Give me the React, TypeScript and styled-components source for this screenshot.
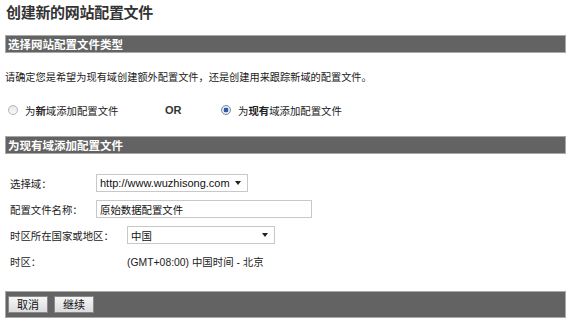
import React, { useState } from "react";
import styled, { createGlobalStyle } from "styled-components";

const GlobalStyle = createGlobalStyle`
  html, body {
    margin: 0;
    padding: 0;
    background: #ffffff;
  }
  body {
    font-family: "Noto Sans CJK SC", "Liberation Sans", sans-serif;
    color: #222;
  }
`;

const Page = styled.div`
  width: 561px;
  margin-left: 5px;
  padding-top: 3px;
`;

const Title = styled.h1`
  margin: 0 0 0 1px;
  font-size: 15px;
  line-height: 18px;
  font-weight: bold;
  color: #333;
  letter-spacing: -0.3px;
`;

const SectionBar = styled.div<{ $top: number }>`
  margin-top: ${({ $top }) => $top}px;
  height: 18px;
  box-sizing: border-box;
  background: #636363;
  border: 1px solid #a8a8a8;
  color: #fff;
  font-size: 11.5px;
  font-weight: bold;
  line-height: 16px;
  padding-left: 2px;
`;

const Intro = styled.p`
  margin: 16px 0 0;
  font-size: 10.2px;
  line-height: 16px;
  color: #222;
`;

const ChoiceRow = styled.div`
  margin-top: 17px;
  height: 16px;
  display: flex;
  align-items: center;
  padding-left: 3px;
  font-size: 10.4px;
`;

const Choice = styled.label<{ $width?: number }>`
  display: flex;
  align-items: center;
  gap: 7px;
  width: ${({ $width }) => ($width ? `${$width}px` : "auto")};
  cursor: pointer;
`;

const RadioDot = styled.span<{ $on: boolean }>`
  width: 10px;
  height: 10px;
  box-sizing: border-box;
  border-radius: 50%;
  border: 1px solid ${({ $on }) => ($on ? "#7a8fa8" : "#b4b4b4")};
  background: ${({ $on }) =>
    $on
      ? "radial-gradient(circle, #2f5aa0 0 2.2px, #dfe6f0 2.6px)"
      : "linear-gradient(#e8e8e8, #fafafa)"};
  flex: none;
`;

const Or = styled.span`
  width: 56px;
  font-family: "Liberation Sans", Arial, sans-serif;
  font-weight: bold;
  font-size: 11px;
  color: #333;
`;

const Form = styled.div`
  margin-top: 20px;
  padding-left: 5px;
  display: grid;
  row-gap: 8px;
`;

const Row = styled.div<{ $label: number }>`
  display: grid;
  grid-template-columns: ${({ $label }) => $label}px auto;
  align-items: center;
  height: 18px;
  font-size: 10.4px;
`;

const FieldLabel = styled.span`
  color: #222;
`;

const Select = styled.div<{ $width: number }>`
  width: ${({ $width }) => $width}px;
  height: 18px;
  box-sizing: border-box;
  border: 1px solid #c8c8c8;
  background: #fff;
  display: flex;
  align-items: center;
  justify-content: space-between;
  padding: 0 6px 0 3px;
  font-size: 10.4px;
`;

const SelectText = styled.span<{ $latin?: boolean }>`
  font-family: ${({ $latin }) =>
    $latin ? `"Liberation Sans", Arial, sans-serif` : "inherit"};
  font-size: ${({ $latin }) => ($latin ? "11px" : "10.4px")};
  color: #111;
`;

const Arrow = styled.span`
  width: 0;
  height: 0;
  border-left: 3.5px solid transparent;
  border-right: 3.5px solid transparent;
  border-top: 4px solid #222;
`;

const TextInput = styled.input`
  width: 216px;
  height: 18px;
  box-sizing: border-box;
  border: 1px solid #c8c8c8;
  padding: 0 3px;
  font-family: "Noto Sans CJK SC", sans-serif;
  font-size: 10.4px;
  color: #111;
  outline: none;
`;

const Value = styled.span`
  font-size: 10.4px;
  color: #222;
  font-family: "Liberation Sans", "Noto Sans CJK SC", sans-serif;
`;

const Footer = styled.div`
  margin-top: 21px;
  height: 27px;
  box-sizing: border-box;
  background: #636363;
  border: 1px solid #a8a8a8;
  display: flex;
  align-items: center;
  gap: 6px;
  padding-left: 2px;
`;

const Button = styled.button`
  width: 40px;
  height: 17px;
  box-sizing: border-box;
  padding: 0;
  border: 1px solid #8a8a8a;
  background: linear-gradient(#f6f6f6, #dcdcdc);
  font-family: "Noto Sans CJK SC", sans-serif;
  font-size: 11px;
  line-height: 15px;
  color: #111;
  cursor: pointer;
`;

export default function App() {
  const [mode, setMode] = useState<"new" | "existing">("existing");
  const [name, setName] = useState("原始数据配置文件");

  return (
    <>
      <GlobalStyle />
      <Page>
        <Title>创建新的网站配置文件</Title>

        <SectionBar $top={14}>选择网站配置文件类型</SectionBar>
        <Intro>
          请确定您是希望为现有域创建额外配置文件，还是创建用来跟踪新域的配置文件。
        </Intro>
        <ChoiceRow>
          <Choice $width={157} onClick={() => setMode("new")}>
            <RadioDot $on={mode === "new"} />
            <span>
              为<b>新</b>域添加配置文件
            </span>
          </Choice>
          <Or>OR</Or>
          <Choice onClick={() => setMode("existing")}>
            <RadioDot $on={mode === "existing"} />
            <span>
              为<b>现有</b>域添加配置文件
            </span>
          </Choice>
        </ChoiceRow>

        <SectionBar $top={18}>为现有域添加配置文件</SectionBar>
        <Form>
          <Row $label={86}>
            <FieldLabel>选择域：</FieldLabel>
            <Select $width={152}>
              <SelectText $latin>http://www.wuzhisong.com</SelectText>
              <Arrow />
            </Select>
          </Row>
          <Row $label={86}>
            <FieldLabel>配置文件名称：</FieldLabel>
            <TextInput value={name} onChange={(e) => setName(e.target.value)} />
          </Row>
          <Row $label={117}>
            <FieldLabel>时区所在国家或地区：</FieldLabel>
            <Select $width={148}>
              <SelectText>中国</SelectText>
              <Arrow />
            </Select>
          </Row>
          <Row $label={117}>
            <FieldLabel>时区：</FieldLabel>
            <Value>(GMT+08:00) 中国时间 - 北京</Value>
          </Row>
        </Form>

        <Footer>
          <Button>取消</Button>
          <Button>继续</Button>
        </Footer>
      </Page>
    </>
  );
}
